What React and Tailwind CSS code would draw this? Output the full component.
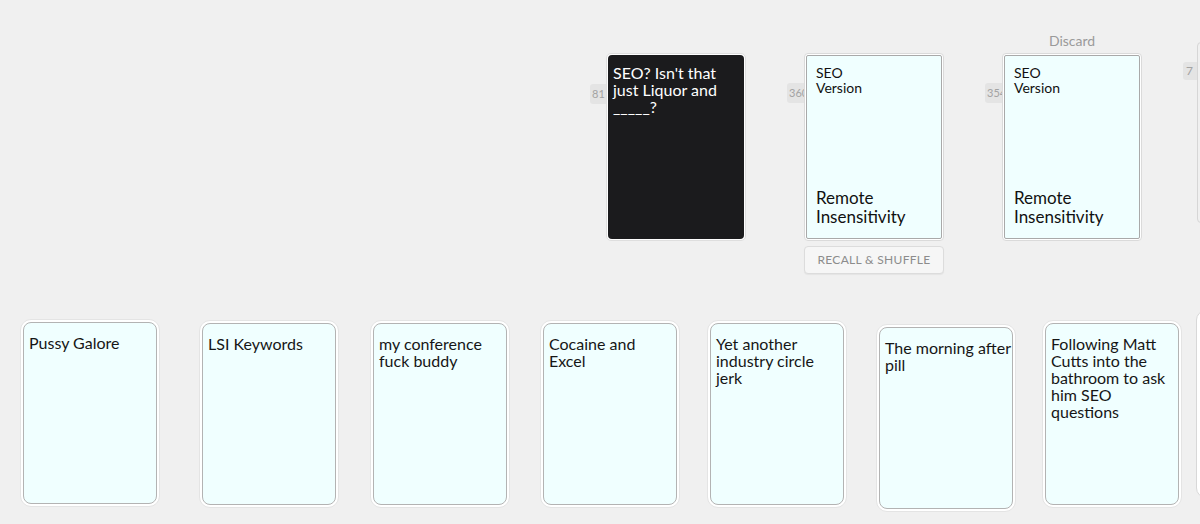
import React from "react";

const font = { fontFamily: "Lato, 'Open Sans', 'Liberation Sans', sans-serif" };

function Badge({ n, cls }) {
  return (
    <div
      className={
        "absolute h-[20px] rounded-[3px] bg-[#e4e4e4] text-[11px] leading-[20px] text-[#a3a3a3] pl-[2px] z-0 " +
        cls
      }
    >
      {n}
    </div>
  );
}

function TopCard({ children }) {
  return (
    <div className="relative z-10 w-[140px] h-[188px] shrink-0 rounded-[4px] bg-white border border-[#dadada] p-[1px]">
      <div className="h-full rounded-[2px] border border-[#a9a9a9] bg-[#f0ffff] flex flex-col justify-between pt-[9px] pb-[12px] px-[9px] text-[#111]">
        {children}
      </div>
    </div>
  );
}

function HandCard({ lines, cls }) {
  return (
    <div
      className={
        "w-[140px] h-[188px] shrink-0 rounded-[11px] bg-white border border-[#e4e4e4] p-[2px] " +
        cls
      }
    >
      <div className="h-full rounded-[8px] border border-[#b3b3b3] bg-[#f0ffff] pt-[11px] px-[5px] text-[16px] leading-[17px] text-[#161616]">
        {lines.map((l, i) => (
          <div key={i} className="whitespace-nowrap">
            {l}
          </div>
        ))}
      </div>
    </div>
  );
}

const hand = [
  { lines: ["Pussy Galore"], cls: "ml-[20px] -mt-[1px]" },
  { lines: ["LSI Keywords"], cls: "ml-[39px]" },
  { lines: ["my conference", "fuck buddy"], cls: "ml-[31px]" },
  { lines: ["Cocaine and", "Excel"], cls: "ml-[30px]" },
  { lines: ["Yet another", "industry circle", "jerk"], cls: "ml-[27px]" },
  { lines: ["The morning after", "pill"], cls: "ml-[29px] mt-[4px]" },
  { lines: ["Following Matt", "Cutts into the", "bathroom to ask", "him SEO", "questions"], cls: "ml-[26px]" },
];

export default function App() {
  return (
    <div
      className="w-[1200px] h-[524px] overflow-hidden bg-[#f0f0f0]"
      style={font}
    >
      {/* table top row */}
      <div className="flex items-start pt-[31px] pl-[606px] gap-[58px] h-[320px]">
        {/* black prompt card */}
        <div className="shrink-0 flex flex-col">
          <div className="h-[22px]" />
          <div className="relative">
            <Badge n="81" cls="-left-[16px] top-[31px] w-[20px]" />
            <div className="relative z-10 w-[140px] h-[188px] rounded-[5px] bg-white border border-[#dedede] p-[1px]">
              <div className="h-full rounded-[4px] bg-[#1b1b1d] pt-[9px] px-[5px] text-white text-[16px] leading-[17px]">
                <div>SEO? Isn't that</div>
                <div>just Liquor and</div>
                <div>_____?</div>
              </div>
            </div>
          </div>
        </div>

        {/* draw pile */}
        <div className="shrink-0 flex flex-col">
          <div className="h-[22px]" />
          <div className="relative">
            <Badge n="360" cls="-left-[17px] top-[30px] w-[22px]" />
            <TopCard>
              <div className="text-[14px] leading-[15px]">
                <div>SEO</div>
                <div>Version</div>
              </div>
              <div className="text-[17px] leading-[19px]">
                <div>Remote</div>
                <div>Insensitivity</div>
              </div>
            </TopCard>
          </div>
          <button className="mt-[5px] w-[140px] h-[28px] rounded-[4px] border border-[#dcdcdc] bg-[#f6f6f6] text-[12px] text-[#8c8c8c] tracking-[0.3px] shadow-[0_1px_1px_rgba(0,0,0,0.05)]">
            RECALL &amp; SHUFFLE
          </button>
        </div>

        {/* discard pile */}
        <div className="shrink-0 flex flex-col">
          <div className="h-[22px] text-center text-[14px] leading-[20px] text-[#9a9a9a]">
            Discard
          </div>
          <div className="relative">
            <Badge n="354" cls="-left-[17px] top-[30px] w-[22px]" />
            <TopCard>
              <div className="text-[14px] leading-[15px]">
                <div>SEO</div>
                <div>Version</div>
              </div>
              <div className="text-[17px] leading-[19px]">
                <div>Remote</div>
                <div>Insensitivity</div>
              </div>
            </TopCard>
          </div>
        </div>

        {/* cut off pile */}
        <div className="relative shrink-0 mt-[11px] -ml-[3px]">
          <div className="absolute -left-[14px] top-[20px] w-[18px] h-[18px] rounded-[3px] bg-[#e4e4e4] text-[12px] leading-[18px] text-[#a3a3a3] pl-[3px]">
            7
          </div>
          <div className="relative z-10 w-[140px] h-[181px] rounded-[4px] bg-[#f0f0f0] border border-[#d6d6d6]" />
        </div>
      </div>

      {/* hand row */}
      <div className="flex items-start">
        {hand.map((c, i) => (
          <HandCard key={i} lines={c.lines} cls={c.cls} />
        ))}
        <div className="ml-[14px] -mt-[10px] w-[140px] h-[188px] shrink-0 rounded-[10px] bg-white border border-[#d8d8d8]" />
      </div>
    </div>
  );
}
